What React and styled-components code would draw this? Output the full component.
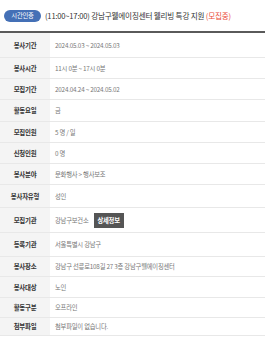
import React from 'react'
import styled, { createGlobalStyle } from 'styled-components'

const rows = [
  { label: '봉사기간', value: '2024.05.03 ~ 2024.05.03', h: 25 },
  { label: '봉사시간', value: '11시 0분 ~ 17시 0분', h: 21 },
  { label: '모집기간', value: '2024.04.24 ~ 2024.05.02', h: 21 },
  { label: '활동요일', value: '금', h: 22 },
  { label: '모집인원', value: '5 명 / 일', h: 21 },
  { label: '신청인원', value: '0 명', h: 21 },
  { label: '봉사분야', value: '문화행사 > 행사보조', h: 21 },
  { label: '봉사자유형', value: '성인', h: 23 },
  { label: '모집기관', value: '강남구보건소', h: 25, detail: true },
  { label: '등록기관', value: '서울특별시 강남구', h: 24 },
  { label: '봉사장소', value: '강남구 선릉로108길 27 3층 강남구웰에이징센터', h: 20 },
  { label: '봉사대상', value: '노인', h: 21 },
  { label: '활동구분', value: '오프라인', h: 20 },
  { label: '첨부파일', value: '첨부파일이 없습니다.', h: 18 },
]

const App = () => (
  <>
    <GlobalStyle />
    <Header>
      <Badge>시간인증</Badge>
      <Title>
        (11:00~17:00) 강남구웰에이징센터 웰리빙 특강 지원 <Status>(모집중)</Status>
      </Title>
    </Header>
    <Table>
      {rows.map(row => (
        <Row key={row.label} $h={row.h}>
          <Label>{row.label}</Label>
          <Value>
            {row.value}
            {row.detail && <DetailButton>상세정보</DetailButton>}
          </Value>
        </Row>
      ))}
    </Table>
  </>
)

export default App

const GlobalStyle = createGlobalStyle`
  body {
    margin: 0;
    background: #fff;
    font-family: "Noto Sans CJK KR", "Noto Sans", sans-serif;
  }
`

const Header = styled.div`
  display: flex;
  align-items: center;
  gap: 4px;
  height: 31px;
  padding-left: 4px;
`

const Badge = styled.span`
  display: inline-flex;
  align-items: center;
  justify-content: center;
  width: 37px;
  height: 12px;
  border-radius: 6px;
  background: #4470b6;
  color: #fff;
  font-size: 6.3px;
  letter-spacing: -0.2px;
`

const Title = styled.div`
  font-size: 7.6px;
  color: #333;
  white-space: nowrap;
  letter-spacing: -0.2px;
`

const Status = styled.span`
  color: #ea4b3a;
`

const Table = styled.div`
  border-top: 2px solid #5a5a5a;
`

const Row = styled.div`
  display: grid;
  grid-template-columns: 50px 1fr;
  height: ${p => p.$h}px;
  border-bottom: 1px solid #e8e8e8;
  box-sizing: border-box;
`

const Label = styled.div`
  display: flex;
  align-items: center;
  justify-content: center;
  background: #f4f4f4;
  color: #333;
  font-size: 6.4px;
  font-weight: bold;
  letter-spacing: -0.2px;
`

const Value = styled.div`
  display: flex;
  align-items: center;
  gap: 5px;
  padding-left: 5px;
  color: #777;
  font-size: 6.3px;
  letter-spacing: -0.2px;
  white-space: nowrap;
`

const DetailButton = styled.span`
  display: inline-flex;
  align-items: center;
  justify-content: center;
  width: 30px;
  height: 15px;
  background: #555;
  color: #fff;
  font-size: 6.3px;
  font-weight: bold;
`
